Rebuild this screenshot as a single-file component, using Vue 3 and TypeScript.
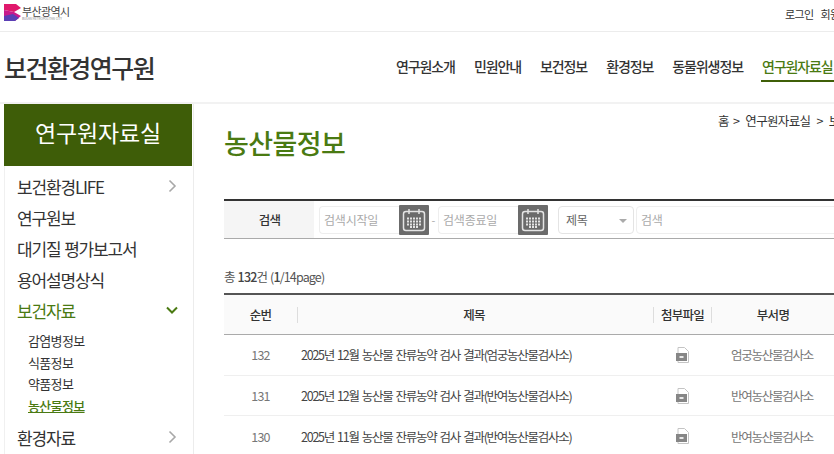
<script setup lang="ts">
interface Row { no: number; title: string; dept: string }
const nav: string[] = ['연구원소개', '민원안내', '보건정보', '환경정보', '동물위생정보', '연구원자료실']
const rows: Row[] = [
  { no: 132, title: '2025년 12월 농산물 잔류농약 검사 결과(엄궁농산물검사소)', dept: '엄궁농산물검사소' },
  { no: 131, title: '2025년 12월 농산물 잔류농약 검사 결과(반여농산물검사소)', dept: '반여농산물검사소' },
  { no: 130, title: '2025년 11월 농산물 잔류농약 검사 결과(반여농산물검사소)', dept: '반여농산물검사소' },
]
const sub: string[] = ['감염병정보', '식품정보', '약품정보', '농산물정보']
</script>

<template>
  <div class="page">
    <div class="topbar">
      <div class="logo">
        <svg width="17" height="17" viewBox="0 0 17 17">
          <path d="M0 0H12L17 4L10 8L0 6Z" fill="#e0186c" />
          <path d="M0 6L10 8L17 12L11 17H0Z" fill="#c81a8c" />
          <path d="M0 12L9 10L15 14L11 17H0Z" fill="#5a3fb5" />
        </svg>
        <div class="logo-text">
          <span class="logo-ko">부산광역시</span>
          <span class="logo-en">BUSAN METROPOLITAN CITY</span>
        </div>
      </div>
      <div class="util"><span>로그인</span><span>회원가입</span></div>
    </div>

    <header class="header">
      <h1>보건환경연구원</h1>
      <nav class="gnb">
        <a v-for="(n, i) in nav" :key="n" :class="{ on: i === nav.length - 1 }">{{ n }}</a>
      </nav>
    </header>

    <div class="body">
      <aside class="side">
        <div class="side-title">연구원자료실</div>
        <ul class="menu">
          <li class="item">보건환경LIFE<svg class="chev" width="9" height="14" viewBox="0 0 9 14"><path d="M1.5 1.5L7 7L1.5 12.5" fill="none" stroke="#a8a8a8" stroke-width="1.6" /></svg></li>
          <li class="item">연구원보</li>
          <li class="item">대기질 평가보고서</li>
          <li class="item">용어설명상식</li>
          <li class="item open">보건자료<svg class="chev down" width="12" height="9" viewBox="0 0 12 9"><path d="M1 1.5L6 6.5L11 1.5" fill="none" stroke="#4a7a12" stroke-width="2" /></svg></li>
          <li class="subs">
            <a v-for="(s, i) in sub" :key="s" :class="{ cur: i === 3 }">{{ s }}</a>
          </li>
          <li class="item">환경자료<svg class="chev" width="9" height="14" viewBox="0 0 9 14"><path d="M1.5 1.5L7 7L1.5 12.5" fill="none" stroke="#a8a8a8" stroke-width="1.6" /></svg></li>
        </ul>
      </aside>

      <main class="main">
        <div class="crumb"><span>홈 &gt;</span><span>연구원자료실</span><span>&gt;</span><span>보건자료</span></div>
        <h2>농산물정보</h2>

        <div class="search">
          <div class="s-label">검색</div>
          <div class="s-fields">
            <div class="box date">검색시작일</div>
            <div class="cal">
              <svg width="24" height="24" viewBox="0 0 24 24" fill="none">
                <rect x="1.5" y="3.5" width="21" height="19" rx="2.5" stroke="#e4e4e4" stroke-width="1.5" />
                <path d="M7 1v5M17 1v5" stroke="#e4e4e4" stroke-width="1.5" />
                <path d="M5 10.5h14M5 13.5h14M5 16.5h14M8 19h8" stroke="#e4e4e4" stroke-width="2" stroke-dasharray="2 1" />
              </svg>
            </div>
            <span class="dash">-</span>
            <div class="box date">검색종료일</div>
            <div class="cal">
              <svg width="24" height="24" viewBox="0 0 24 24" fill="none">
                <rect x="1.5" y="3.5" width="21" height="19" rx="2.5" stroke="#e4e4e4" stroke-width="1.5" />
                <path d="M7 1v5M17 1v5" stroke="#e4e4e4" stroke-width="1.5" />
                <path d="M5 10.5h14M5 13.5h14M5 16.5h14M8 19h8" stroke="#e4e4e4" stroke-width="2" stroke-dasharray="2 1" />
              </svg>
            </div>
            <div class="box select">제목<i class="caret"></i></div>
            <div class="box keyword">검색</div>
          </div>
        </div>

        <p class="total">총 <b>132</b>건 (<b>1</b>/14page)</p>

        <div class="table">
          <div class="tr th">
            <div class="c-no">순번</div>
            <div class="c-title"><span>제목</span></div>
            <div class="c-file">첨부파일</div>
            <div class="c-dept">부서명</div>
          </div>
          <div v-for="r in rows" :key="r.no" class="tr td">
            <div class="c-no">{{ r.no }}</div>
            <div class="c-title">{{ r.title }}</div>
            <div class="c-file">
              <svg width="15" height="16" viewBox="0 0 15 16">
                <path d="M3 .5H9.5L13.5 4.5V15.5H3Z" fill="#fff" stroke="#c4c4c4" />
                <path d="M1 6H12V14H1Z" fill="#868686" />
                <path d="M4.5 9H8.5V11H4.5Z" fill="#e8e8e8" />
              </svg>
            </div>
            <div class="c-dept">{{ r.dept }}</div>
          </div>
        </div>
      </main>
    </div>
  </div>
</template>

<style>
html, body { margin: 0; overflow: hidden; background: #fff; }
</style>

<style scoped>
.page { width: 834px; height: 454px; overflow: hidden; font-family: "Noto Sans CJK KR", "Noto Sans", sans-serif; color: #333; }
.topbar { height: 31px; border-bottom: 1px solid #ececec; display: flex; justify-content: space-between; align-items: center; padding-left: 4px; white-space: nowrap; }
.logo { display: flex; align-items: center; gap: 1px; margin-top: -6px; }
.logo-text { display: flex; flex-direction: column; }
.logo-ko { font-size: 11px; letter-spacing: -0.6px; color: #444; line-height: 12px; }
.logo-en { font-size: 3px; color: #888; line-height: 4px; }
.util { display: flex; gap: 7px; width: 49px; font-size: 11px; letter-spacing: -0.6px; color: #333; margin-top: -3px; flex-shrink: 0; }
.header { height: 70px; border-bottom: 2px solid #f2f2f2; display: flex; justify-content: space-between; padding-left: 4px; white-space: nowrap; }
h1 { margin: 0; font-size: 25px; font-weight: 500; line-height: 70px; letter-spacing: -1.55px; color: #333; }
.gnb { display: flex; gap: 19px; width: 438px; flex-shrink: 0; overflow: hidden; padding-top: 22px; box-sizing: border-box; }
.gnb a { font-size: 14px; font-weight: 500; line-height: 24px; height: 26px; letter-spacing: -1.1px; color: #333; }
.gnb a.on { color: #4a7a12; border-bottom: 2px solid #3f5f08; padding-left: 1px; margin-left: -1px; padding-right: 10px; }
.body { display: flex; padding-left: 4px; }
.side { width: 190px; height: 351px; border-right: 1px solid #ececec; border-left: 1px solid #f0f0f0; box-sizing: border-box; flex-shrink: 0; margin-right: 30px; }
.side-title { height: 62px; margin-left: -1px; width: 188px; background: #3e5d08; color: #fff; font-size: 23px; line-height: 57px; text-align: center; letter-spacing: -0.2px; }
.menu { list-style: none; margin: 0; padding: 5px 0 0 12px; }
.item { height: 31.1px; line-height: 31px; font-size: 17px; letter-spacing: -1.15px; word-spacing: 1px; color: #333; position: relative; white-space: nowrap; }
.item.open { color: #4a7a12; }
.chev { position: absolute; left: 151px; top: 8px; }
.chev.down { left: 149px; top: 11px; }
.subs { display: flex; flex-direction: column; padding: 4px 0 6px 11px; }
.subs a { font-size: 13px; line-height: 21.4px; letter-spacing: -0.65px; color: #333; }
.subs a.cur { color: #4a7a12; font-weight: 500; text-decoration: underline; }
.main { width: 700px; flex-shrink: 0; position: relative; }
.crumb { display: flex; gap: 6px; font-size: 12.5px; line-height: 18px; color: #333; white-space: nowrap; padding: 8px 0 0 494px; height: 18px; letter-spacing: -0.65px; word-spacing: 2px; }
h2 { margin: 0; font-size: 27px; font-weight: 500; line-height: 38px; letter-spacing: -0.6px; color: #4a7a12; height: 69px; margin-top: -6px; padding-bottom: 6px; }
.search { display: flex; height: 37px; border-top: 2px solid #333; border-bottom: 1px solid #aaa; }
.s-label { width: 90px; background: #f5f5f5; text-align: center; font-size: 12.5px; font-weight: 500; line-height: 37px; letter-spacing: -0.7px; padding-left: 1px; box-sizing: border-box; color: #333; flex-shrink: 0; }
.s-fields { display: flex; align-items: center; padding-left: 5px; }
.box { height: 28px; box-sizing: border-box; border: 1px solid #eee; border-radius: 4px; font-size: 12px; line-height: 25px; padding-left: 4px; color: #aaa; flex-shrink: 0; letter-spacing: -0.2px; }
.date { width: 80px; border-radius: 4px 0 0 4px; border-right: 0; }
.cal { width: 30px; height: 30px; background: #6b6b6b; border-radius: 1px; display: flex; align-items: center; justify-content: center; flex-shrink: 0; }
.dash { width: 9px; text-align: center; font-size: 11px; color: #aaa; flex-shrink: 0; }
.select { width: 76px; margin-left: 10px; margin-right: 2px; color: #666; padding-left: 7px; position: relative; border-color: #e4e4e4; }
.caret { position: absolute; right: 6px; top: 12px; border: 4px solid transparent; border-top: 4px solid #aaa; border-bottom: 0; }
.keyword { width: 300px; }
.total { margin: 0; padding-top: 29px; font-size: 12.5px; line-height: 18px; letter-spacing: -0.85px; word-spacing: 1px; height: 25px; color: #555; }
.total b { color: #444; font-weight: 500; }
.table { width: 640px; border-top: 2px solid #555; }
.tr { display: flex; align-items: center; }
.th { height: 39px; border-bottom: 1px solid #aaa; background: #fafafa; font-size: 12.5px; font-weight: 500; text-align: center; color: #333; letter-spacing: -0.7px; }
.td { height: 39.7px; border-bottom: 1px solid #efefef; font-size: 12.5px; letter-spacing: -1.25px; word-spacing: 1.5px; color: #444; }
.c-no { width: 73px; text-align: center; flex-shrink: 0; }
.td .c-no { color: #777; letter-spacing: -0.8px; }
.c-title { width: 357px; flex-shrink: 0; padding-left: 4px; box-sizing: border-box; white-space: nowrap; }
.th .c-title { height: 16px; line-height: 16px; border-left: 1px solid #ddd; border-right: 1px solid #ddd; text-align: center; padding-left: 0; padding-right: 3px; }
.c-file { width: 58px; flex-shrink: 0; text-align: center; }
.c-file svg { display: block; margin: 0 auto; transform: translateX(-1px); }
.th .c-file { height: 16px; line-height: 16px; border-right: 1px solid #ddd; box-sizing: border-box; }
.c-dept { width: 150px; padding-left: 19px; box-sizing: border-box; white-space: nowrap; color: #777; flex-shrink: 0; }
.th .c-dept { padding: 0 28px 0 0; color: #333; }
</style>
